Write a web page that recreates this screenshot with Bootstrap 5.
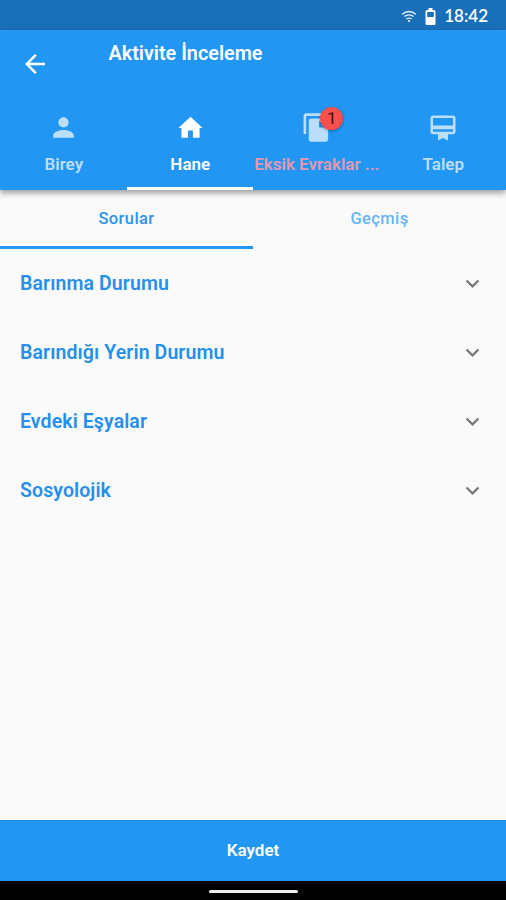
<!DOCTYPE html>
<html lang="tr">
<head>
<meta charset="utf-8">
<meta name="viewport" content="width=device-width, initial-scale=1">
<title>Aktivite İnceleme</title>
<link href="https://cdn.jsdelivr.net/npm/bootstrap@5.3.0/dist/css/bootstrap.min.css" rel="stylesheet">
<style>
body{font-family:Roboto,"Noto Sans",sans-serif;background:#fafafa;height:900px;overflow:hidden}
svg{display:block;flex:none}
.status{height:30px;background:#1a70b8;font:600 17px/28px Lato,sans-serif;padding:2px 18px 0 0}
.appbar{height:160px;background:#2196f3;box-shadow:0 3px 6px rgba(0,0,0,.38);z-index:2}
.titlebar{height:70px;padding-left:20px}
.back{margin-top:19px}
.title{font-size:19.8px;line-height:24px;font-weight:600;margin:12px 0 0 58.5px}
.tab{width:25%;height:90px;padding-top:12px;color:#bbdefb;border-bottom:3px solid transparent;text-decoration:none;white-space:nowrap}
.tab.current{color:#fff;border-color:#fff}
.tab .label{font-size:17px;line-height:22px;font-weight:600;margin-top:10px;padding-left:1px}
.icon-box{height:31px;margin-left:1px}
.missing{color:#e699ae}
.count{left:19px;top:-5px;width:23px;height:23px;background:#f9504d;color:#301616;font-size:17px;line-height:23px;box-shadow:0 1px 3px rgba(0,0,0,.35)}
.subtab{height:59px;padding-top:17px;font-size:16.5px;line-height:24px;font-weight:500;letter-spacing:.4px;color:#64b5f6;border-bottom:3px solid transparent;text-decoration:none}
.subtab.current{color:#2b93e9;border-color:#2196f3}
.section-row{height:69px;padding:1px 20px 0;background:none;border:0;color:#2490ec;font-size:19.5px;font-weight:600;letter-spacing:.1px}
.section-row svg{margin-bottom:2px}
.save{height:61px;background:#2196f3;border:0;border-top:1px solid #1e86d8;color:#fff;font-size:17px;font-weight:600}
.gesture{height:19px;padding-top:2px}
.gesture span{width:89px;height:3px;background:#eee;border-radius:2px}
</style>
<script src="https://cdn.jsdelivr.net/npm/bootstrap@5.3.0/dist/js/bootstrap.bundle.min.js"></script>
</head>
<body class="d-flex flex-column m-0">
<div class="status d-flex justify-content-end align-items-center text-white">
  <svg width="16" height="13" viewBox="0 0 16 13" fill="none" stroke="#e4f0fa" stroke-width="1.3"><path d="M1 4.2Q8-1.2 15 4.2M3.3 6.6Q8 3 12.7 6.6M5.5 8.9Q8 7.2 10.5 8.9"/><circle cx="8" cy="11" r="1" fill="#fff" stroke="none"/></svg>
  <svg class="ms-2" width="11" height="17" viewBox="0 0 11 17"><path fill="#fff" fill-rule="evenodd" d="M3.5 0h4v2H9q1.500 0 1.500 1.500v12q0 1.500-1.500 1.500H2Q.5 17 .5 15.500v-12Q.5 2 2 2h1.500zM2.200 4v5h6.600V4z"/></svg>
  <span class="ms-2">18:42</span>
</div>
<header class="appbar position-relative text-white">
  <div class="titlebar d-flex align-items-start">
    <svg class="back" width="30" height="30" viewBox="0 0 24 24" fill="#fff"><path d="M20 11H7.830l5.590-5.590L12 4l-8 8 8 8 1.410-1.410L7.830 13H20z"/></svg>
    <h1 class="title">Aktivite İnceleme</h1>
  </div>
  <nav class="d-flex">
    <a class="tab d-flex flex-column align-items-center" href="#">
      <span class="icon-box d-flex align-items-center"><svg width="31" height="31" viewBox="0 0 24 24" fill="currentColor"><path d="M12 12c2.210 0 4-1.790 4-4s-1.790-4-4-4-4 1.790-4 4 1.790 4 4 4zm0 2c-2.670 0-8 1.340-8 4v2h16v-2c0-2.660-5.330-4-8-4z"/></svg></span>
      <span class="label">Birey</span>
    </a>
    <a class="tab current d-flex flex-column align-items-center" href="#">
      <span class="icon-box d-flex align-items-center"><svg width="29" height="29" viewBox="0 0 24 24" fill="currentColor"><path d="M10 20.500v-6h4v6h5.500v-8H22L12 3 2 12.500h2.500v8z"/></svg></span>
      <span class="label">Hane</span>
    </a>
    <a class="tab d-flex flex-column align-items-center" href="#">
      <span class="icon-box d-flex align-items-center position-relative"><svg width="31" height="31" viewBox="0 0 24 24" fill="currentColor"><path d="M16 1H4c-1.100 0-2 .9-2 2v14h2V3h12V1zm-1 4 6 6v10c0 1.100-.9 2-2 2H7.990C6.890 23 6 22.100 6 21l.01-14c0-1.100.89-2 1.990-2h7zm-1 7h5.500L14 6.500V12z"/></svg><span class="count position-absolute rounded-circle text-center">1</span></span>
      <span class="label missing">Eksik Evraklar ...</span>
    </a>
    <a class="tab d-flex flex-column align-items-center" href="#">
      <span class="icon-box d-flex align-items-center"><svg width="30" height="30" viewBox="0 0 24 24" fill="currentColor"><path d="M20 2H4c-1.110 0-2 .89-2 2v11c0 1.110.89 2 2 2h4v5l4-2 4 2v-5h4c1.110 0 2-.89 2-2V4c0-1.110-.89-2-2-2zm0 13H4v-2h16v2zm0-5H4V4h16v6z"/></svg></span>
      <span class="label">Talep</span>
    </a>
  </nav>
</header>
<nav class="d-flex">
  <a class="subtab current w-50 text-center" href="#">Sorular</a>
  <a class="subtab w-50 text-center" href="#">Geçmiş</a>
</nav>
<main class="flex-grow-1 d-flex flex-column">
  <button class="section-row d-flex align-items-center justify-content-between">Barınma Durumu<svg width="27" height="27" viewBox="0 0 24 24" fill="#777"><path d="M16.590 8.590 12 13.170 7.410 8.590 6 10l6 6 6-6z"/></svg></button>
  <button class="section-row d-flex align-items-center justify-content-between">Barındığı Yerin Durumu<svg width="27" height="27" viewBox="0 0 24 24" fill="#777"><path d="M16.590 8.590 12 13.170 7.410 8.590 6 10l6 6 6-6z"/></svg></button>
  <button class="section-row d-flex align-items-center justify-content-between">Evdeki Eşyalar<svg width="27" height="27" viewBox="0 0 24 24" fill="#777"><path d="M16.590 8.590 12 13.170 7.410 8.590 6 10l6 6 6-6z"/></svg></button>
  <button class="section-row d-flex align-items-center justify-content-between">Sosyolojik<svg width="27" height="27" viewBox="0 0 24 24" fill="#777"><path d="M16.590 8.590 12 13.170 7.410 8.590 6 10l6 6 6-6z"/></svg></button>
</main>
<button class="save w-100">Kaydet</button>
<div class="gesture bg-black d-flex justify-content-center align-items-center"><span></span></div>
</body>
</html>
